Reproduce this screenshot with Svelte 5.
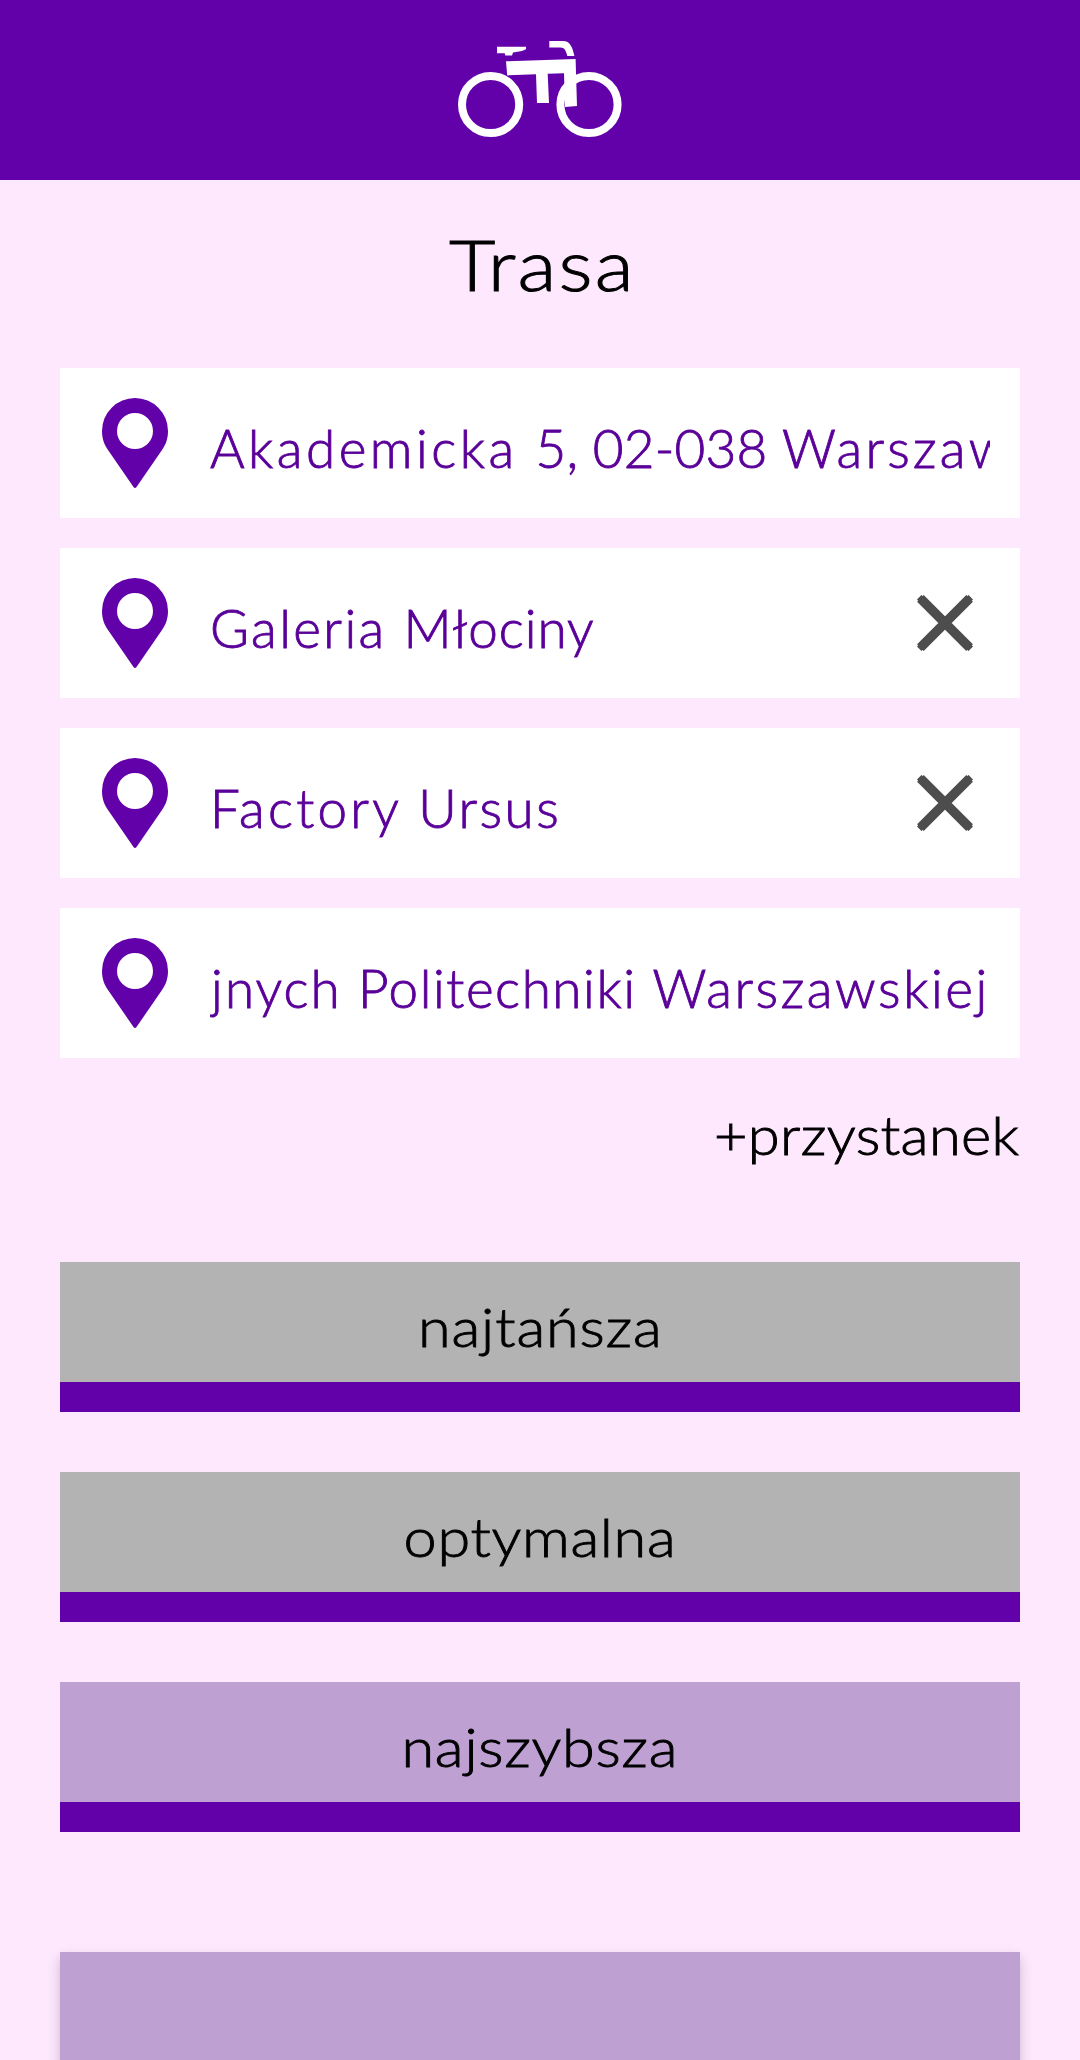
<script>
  const stops = [
    {
      words: [['Akademicka ', 3.5], ['5, ', 0.2], ['02-038 ', 0.2], ['Warszawa', 3.3]],
      removable: false
    },
    { words: [['Galeria ', 2.4], ['Młociny', 1]], removable: true },
    { words: [['Factory ', 3.2], ['Ursus', 2.5]], removable: true },
    {
      words: [['jnych ', 2], ['Politechniki ', 1.55], ['Warszawskiej', 2.6]],
      removable: false,
      scrolled: true
    }
  ];

  const variants = [
    { label: 'najtańsza', spacing: 0.8 },
    { label: 'optymalna', spacing: 0.6 },
    { label: 'najszybsza', spacing: 0.7 }
  ];

  let chosen = $state('najszybsza');
</script>

<div class="page">
  <header>
    <svg class="bike" viewBox="0 0 200 160" width="200" height="160" fill="#fff">
      <g fill="none" stroke="#fff" stroke-width="8">
        <circle cx="50.6" cy="84.5" r="28.6" />
        <circle cx="149" cy="84.5" r="28.6" />
      </g>
      <path d="M57 26.7H86V29.3L82 31L73 32.6L72 35.4H65.3L64.7 33.3H57Z" />
      <path d="M109.3 21H123C130 21 132.5 27 134.4 36H127.3C126 31 124.5 27.6 120.5 27.6H109.3Z" />
      <path d="M66 41.3L135.6 39L137 86L125 87L124 53.2L107.7 53.7L109 83H97L96 54.2L67.2 55.4Z" />
    </svg>
  </header>

  <main>
    <h1>Trasa</h1>

    <ul class="stops">
      {#each stops as stop}
        <li class="stop">
          <svg class="pin" viewBox="0 0 66 90" width="66" height="90">
            <path
              fill="#6200a9"
              fill-rule="evenodd"
              d="M33 0A33 33 0 0 1 66 33C66 41 63.500 47 60 52L34.500 89Q33 91 31.500 89L6 52C2.500 47 0 41 0 33A33 33 0 0 1 33 0ZM33 15A18 18 0 1 0 33 51A18 18 0 1 0 33 15Z"
            />
          </svg>
          <span class="address" class:scrolled={stop.scrolled}>
            <span class="line">{#each stop.words as [text, spacing]}<span style:letter-spacing="{spacing}px">{text}</span>{/each}</span>
          </span>
          {#if stop.removable}
            <button class="remove" aria-label="usuń">
              <svg viewBox="0 0 56 56" width="56" height="56">
                <path
                  d="M3.400 3.400L52.600 52.600M52.600 3.400L3.400 52.600"
                  stroke="#4d4d4d"
                  stroke-width="9.400"
                />
                <path
                  d="M2.200 2.200L53.800 53.800M53.800 2.200L2.200 53.800"
                  stroke="#4d4d4d"
                  stroke-width="6.400"
                />
              </svg>
            </button>
          {/if}
        </li>
      {/each}
    </ul>

    <button class="add">+przystanek</button>

    <div class="variants">
      {#each variants as v}
        <button
          class="variant"
          class:chosen={chosen === v.label}
          onclick={() => (chosen = v.label)}
        >
          <span class="label" style:letter-spacing="{v.spacing}px">{v.label}</span>
        </button>
      {/each}
    </div>

    <section class="card"></section>
  </main>
</div>

<style>
  :global(body) {
    background: #fee8fe;
  }

  .page {
    width: 1080px;
    height: 2060px;
    overflow: hidden;
    background: #fee8fe;
    color: #000;
    font-family: Lato, 'Open Sans', sans-serif;
    font-weight: 300;
    -webkit-text-stroke: 0.9px currentColor;
  }

  button {
    margin: 0;
    padding: 0;
    border: 0;
    background: none;
    color: inherit;
    font: inherit;
    cursor: pointer;
  }

  svg {
    display: block;
  }

  header {
    display: flex;
    justify-content: center;
    height: 180px;
    padding-top: 20px;
    box-sizing: border-box;
    background: #6200a9;
  }

  main {
    display: flex;
    flex-direction: column;
    padding: 41px 60px 0;
  }

  h1 {
    margin: 0 0 61px;
    padding-left: 4px;
    font-size: 71px;
    font-weight: 300;
    line-height: 86px;
    letter-spacing: 1.9px;
    text-align: center;
    transform: scaleX(1.13);
    -webkit-text-stroke-width: 1px;
  }

  .stops {
    display: flex;
    flex-direction: column;
    gap: 30px;
    margin: 0;
    padding: 0;
    list-style: none;
  }

  .stop {
    display: flex;
    align-items: flex-start;
    height: 150px;
    padding: 30px 30px 0 42px;
    box-sizing: border-box;
    background: #fff;
    color: #5a0099;
  }

  .pin {
    flex: none;
    margin-right: 42px;
  }

  .address {
    display: flex;
    flex: 1;
    min-width: 0;
    margin-top: 18px;
    overflow: hidden;
    font-size: 53px;
    line-height: 64px;
    white-space: pre;
  }

  .address.scrolled {
    justify-content: flex-end;
  }

  .line {
    flex: none;
  }

  .remove {
    flex: none;
    margin: 17px 17px 0 0;
  }

  .add {
    align-self: flex-end;
    margin: 45px 1px 0 0;
    font-size: 54px;
    line-height: 64px;
    letter-spacing: 0.3px;
    transform: scaleX(1.07);
    transform-origin: right;
  }

  .variants {
    display: flex;
    flex-direction: column;
    gap: 60px;
    margin-top: 95px;
  }

  .variant {
    display: flex;
    justify-content: center;
    align-items: flex-start;
    height: 150px;
    padding-top: 33px;
    box-sizing: border-box;
    border-bottom: 30px solid #6200a9;
    background: #b3b3b3;
    font-size: 54px;
    line-height: 64px;
  }

  .variant.chosen {
    background: #bea1d2;
  }

  .label {
    transform: scaleX(1.1);
  }

  .card {
    height: 240px;
    margin-top: 120px;
    background: #bea1d2;
    box-shadow: 0 6px 12px rgba(0, 0, 0, 0.2);
  }
</style>
